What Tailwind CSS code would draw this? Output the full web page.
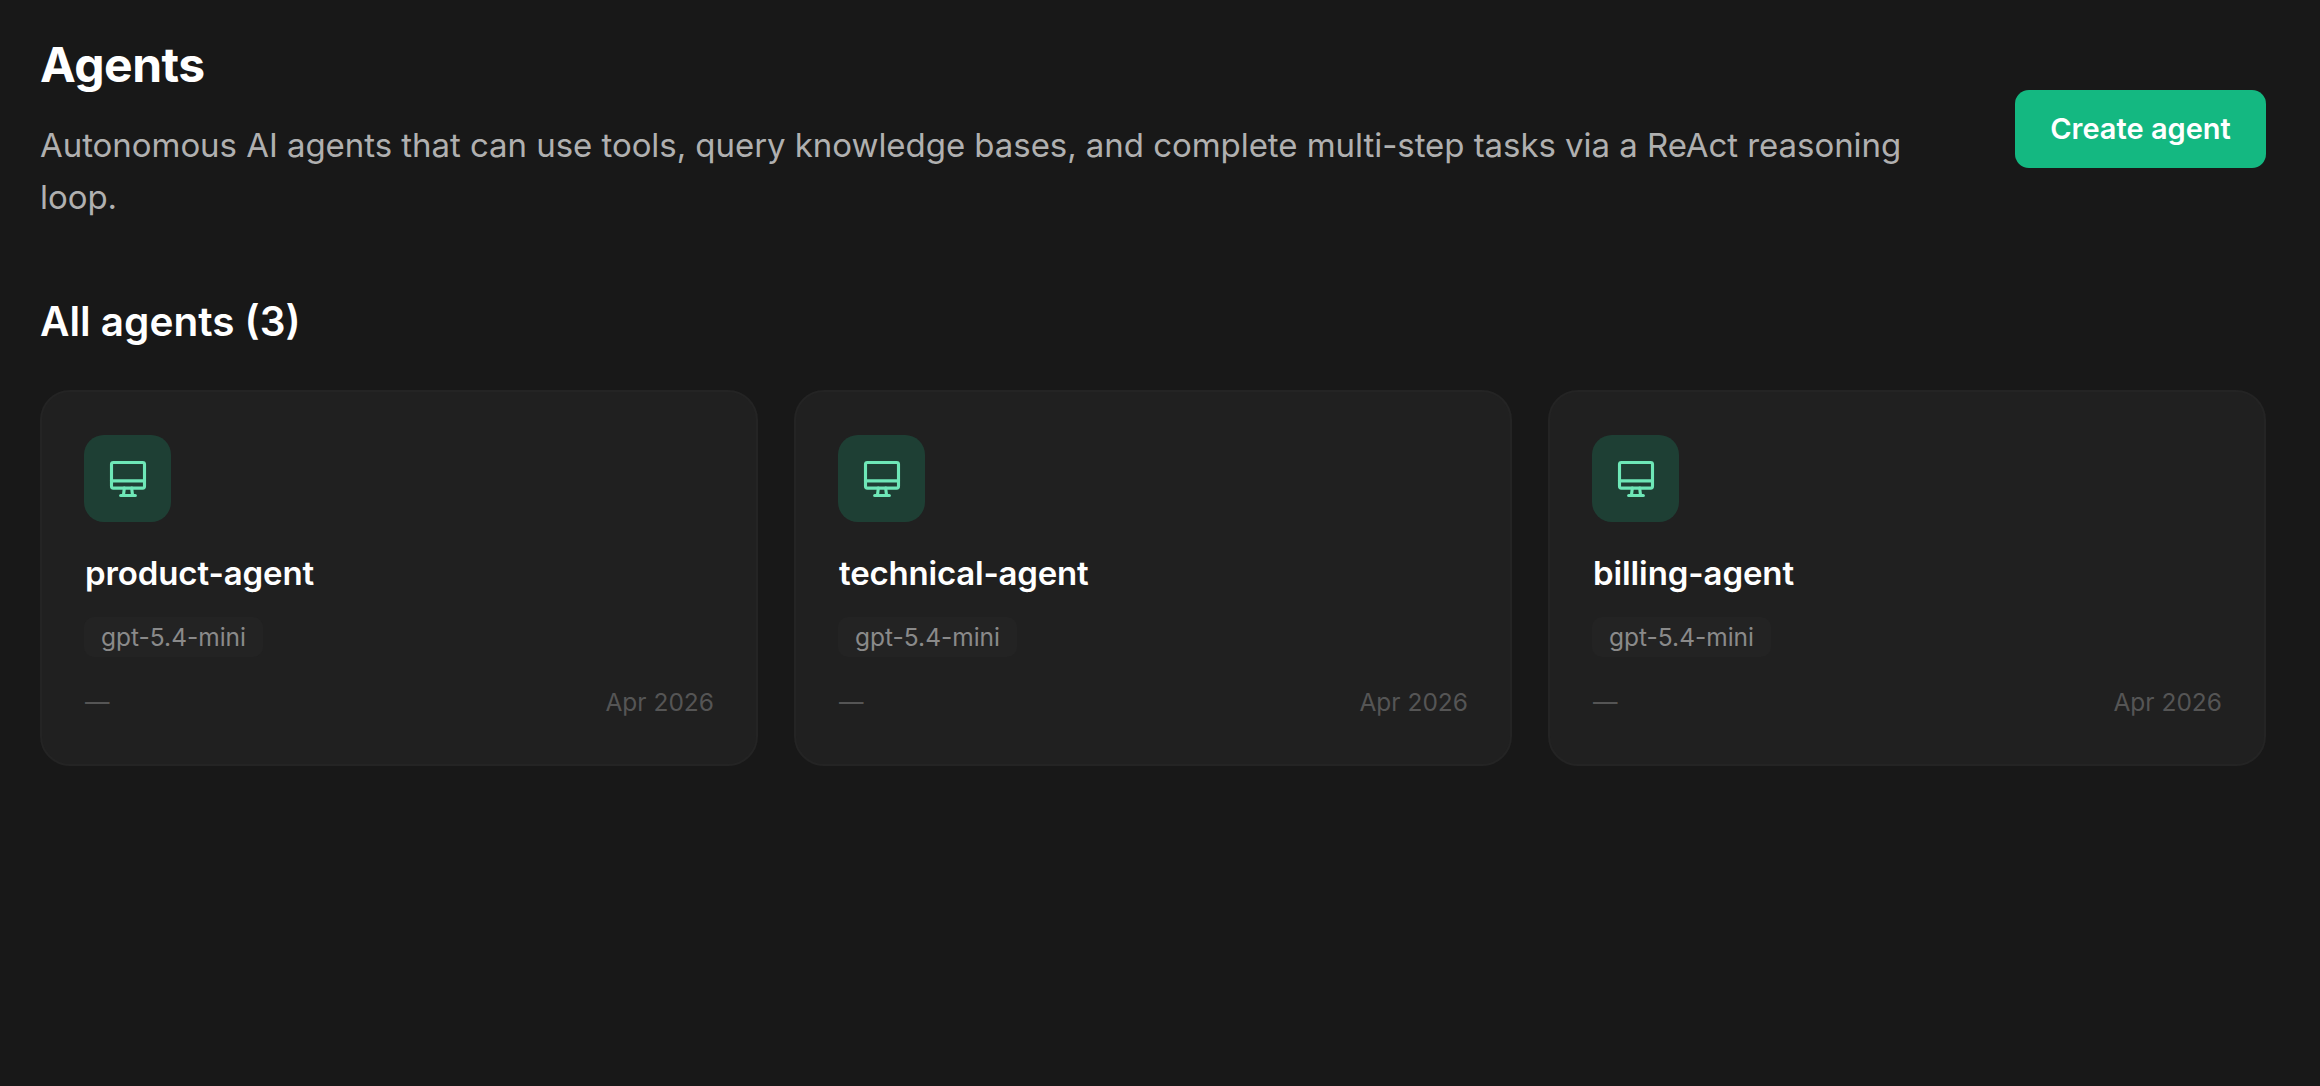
<!DOCTYPE html>
<html lang="en">

<head>
    <meta charset="UTF-8">
    <meta name="viewport" content="width=device-width, initial-scale=1.0">
    <title>Agents</title>
    <script src="https://cdn.jsdelivr.net/npm/@tailwindcss/browser@4"></script>
</head>

<body class="bg-[#181818] min-h-screen font-['Inter',sans-serif] text-white">
    <main class="pt-[35px] pl-10 pr-[54px]">
        <header class="flex items-center justify-between">
            <div class="w-[1900px]">
                <h1 class="text-[48px] leading-[60px] font-bold tracking-[-0.5px] mb-[24px]">Agents</h1>
                <p class="text-[33px] leading-[52px] text-[#b0b0b0] tracking-[-0.05px]">Autonomous AI agents that can use tools, query knowledge bases, and complete multi-step tasks via a ReAct reasoning loop.</p>
            </div>
            <button class="w-[251px] h-[78px] rounded-[14px] bg-[#14b881] text-[29px] font-semibold text-white">Create agent</button>
        </header>

        <h2 class="mt-[75px] mb-[44px] text-[40.5px] leading-[48px] font-semibold">All agents (3)</h2>

        <section class="grid grid-cols-3 gap-[36px]">
            <article class="h-[376px] rounded-[30px] border-2 border-[#242424] bg-[#202020] px-[42px] pt-[43px]">
                <div class="w-[87px] h-[87px] rounded-[20px] bg-[#1e3f34] flex items-center justify-center">
                    <svg class="w-[44px] h-[44px] text-[#6ee7b7]" viewBox="0 0 24 24" fill="none" stroke="currentColor" stroke-width="1.7" stroke-linecap="round" stroke-linejoin="round"><path d="M3 4a1 1 0 0 1 1 -1h16a1 1 0 0 1 1 1v12a1 1 0 0 1 -1 1h-16a1 1 0 0 1 -1 -1v-12z" /><path d="M3 13h18" /><path d="M8 21h8" /><path d="M10 17l-.5 4" /><path d="M14 17l.5 4" /></svg>
                </div>
                <h3 class="mt-[27px] mb-[20px] text-[33px] leading-[48px] font-semibold tracking-[-0.1px] pl-px">product-agent</h3>
                <span class="inline-block h-[40px] px-[17px] rounded-[10px] bg-[#232323] text-[24.5px] leading-[40px] text-[#8a8a8a]">gpt-5.4-mini</span>
                <div class="mt-[25px] flex items-center justify-between text-[24.5px] leading-[40px] text-[#555555]">
                    <span class="pl-px">—</span>
                    <span>Apr 2026</span>
                </div>
            </article>

            <article class="h-[376px] rounded-[30px] border-2 border-[#242424] bg-[#202020] px-[42px] pt-[43px]">
                <div class="w-[87px] h-[87px] rounded-[20px] bg-[#1e3f34] flex items-center justify-center">
                    <svg class="w-[44px] h-[44px] text-[#6ee7b7]" viewBox="0 0 24 24" fill="none" stroke="currentColor" stroke-width="1.7" stroke-linecap="round" stroke-linejoin="round"><path d="M3 4a1 1 0 0 1 1 -1h16a1 1 0 0 1 1 1v12a1 1 0 0 1 -1 1h-16a1 1 0 0 1 -1 -1v-12z" /><path d="M3 13h18" /><path d="M8 21h8" /><path d="M10 17l-.5 4" /><path d="M14 17l.5 4" /></svg>
                </div>
                <h3 class="mt-[27px] mb-[20px] text-[33px] leading-[48px] font-semibold tracking-[-0.2px] pl-px">technical-agent</h3>
                <span class="inline-block h-[40px] px-[17px] rounded-[10px] bg-[#232323] text-[24.5px] leading-[40px] text-[#8a8a8a]">gpt-5.4-mini</span>
                <div class="mt-[25px] flex items-center justify-between text-[24.5px] leading-[40px] text-[#555555]">
                    <span class="pl-px">—</span>
                    <span>Apr 2026</span>
                </div>
            </article>

            <article class="h-[376px] rounded-[30px] border-2 border-[#242424] bg-[#202020] px-[42px] pt-[43px]">
                <div class="w-[87px] h-[87px] rounded-[20px] bg-[#1e3f34] flex items-center justify-center">
                    <svg class="w-[44px] h-[44px] text-[#6ee7b7]" viewBox="0 0 24 24" fill="none" stroke="currentColor" stroke-width="1.7" stroke-linecap="round" stroke-linejoin="round"><path d="M3 4a1 1 0 0 1 1 -1h16a1 1 0 0 1 1 1v12a1 1 0 0 1 -1 1h-16a1 1 0 0 1 -1 -1v-12z" /><path d="M3 13h18" /><path d="M8 21h8" /><path d="M10 17l-.5 4" /><path d="M14 17l.5 4" /></svg>
                </div>
                <h3 class="mt-[27px] mb-[20px] text-[33px] leading-[48px] font-semibold tracking-[-0.1px] pl-px">billing-agent</h3>
                <span class="inline-block h-[40px] px-[17px] rounded-[10px] bg-[#232323] text-[24.5px] leading-[40px] text-[#8a8a8a]">gpt-5.4-mini</span>
                <div class="mt-[25px] flex items-center justify-between text-[24.5px] leading-[40px] text-[#555555]">
                    <span class="pl-px">—</span>
                    <span>Apr 2026</span>
                </div>
            </article>
        </section>
    </main>
</body>

</html>
